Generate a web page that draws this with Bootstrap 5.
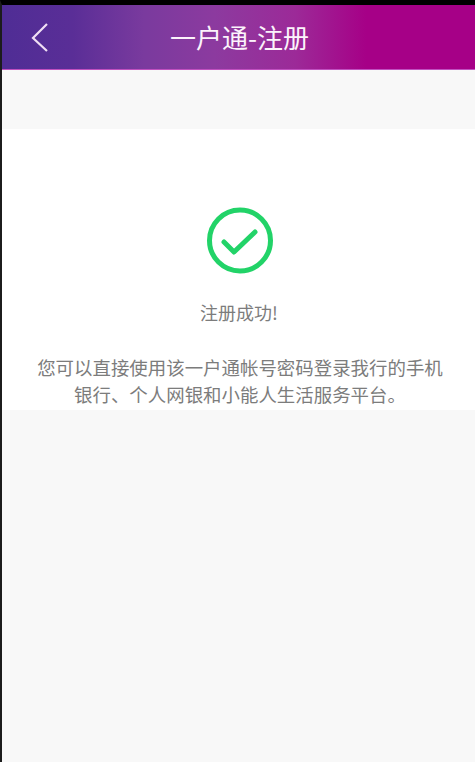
<!DOCTYPE html>
<html lang="zh">
<head>
<meta charset="utf-8">
<title>一户通-注册</title>
<link href="https://cdn.jsdelivr.net/npm/bootstrap@5.3.0/dist/css/bootstrap.min.css" rel="stylesheet">
<style>
html, body { height: 100%; }
body { background: #f8f8f8; font-family: "Noto Sans CJK SC", "Liberation Sans", sans-serif; }
.app-frame { min-height: 762px; border-top: 5px solid #000; border-left: 2px solid #1c1c1c; }
.app-header { height: 65px; padding-left: 2px; background: linear-gradient(90deg, #4f2d95 0%, #5a2e97 15%, #7a3a9e 30%, #8c3a9f 45%, #9c2a98 62%, #a60087 77%, #a60087 100%); border-bottom: 1px solid #c050c0; }
.back-btn { left: 27px; top: 16px; width: 24px; height: 32px; line-height: 0; }
.app-title { font-size: 26px; color: #fbf3fb; font-weight: 400; line-height: 1; }
.gap-band { height: 59px; }
.result-panel { height: 281px; padding-top: 78px; padding-left: 3px; color: #7c7c7c; }
.ok-icon { width: 68px; height: 68px; display: block; }
.ok-label { font-size: 18px; line-height: 24px; margin-top: 25px; margin-right: 2px; font-weight: 400; }
.ok-text { font-size: 18.45px; line-height: 27px; margin-top: 30px; font-weight: 400; padding: 0 30px; }
</style>
</head>
<body>
<div class="app-frame d-flex flex-column">
  <header class="app-header position-relative d-flex align-items-center justify-content-center">
    <a class="back-btn position-absolute" href="#" aria-label="返回">
      <svg width="24" height="32" viewBox="0 0 24 32" fill="none" stroke="#f0dff4" stroke-width="2.2"><path d="M18 3 4 17l14 13"/></svg>
    </a>
    <h1 class="app-title m-0">一户通-注册</h1>
  </header>
  <div class="gap-band"></div>
  <main class="result-panel bg-white text-center d-flex flex-column align-items-center">
    <svg class="ok-icon" viewBox="0 0 68 68" fill="none" stroke="#22d368" aria-hidden="true">
      <circle cx="34" cy="33.5" r="30.5" stroke-width="5"/>
      <path d="M18 35l10 10 21-20" stroke-width="5" stroke-linecap="round" stroke-linejoin="round"/>
    </svg>
    <p class="ok-label mb-0">注册成功!</p>
    <p class="ok-text mb-0">您可以直接使用该一户通帐号密码登录我行的手机<br>银行、个人网银和小能人生活服务平台。</p>
  </main>
</div>
<script src="https://cdn.jsdelivr.net/npm/bootstrap@5.3.0/dist/js/bootstrap.bundle.min.js"></script>
</body>
</html>
